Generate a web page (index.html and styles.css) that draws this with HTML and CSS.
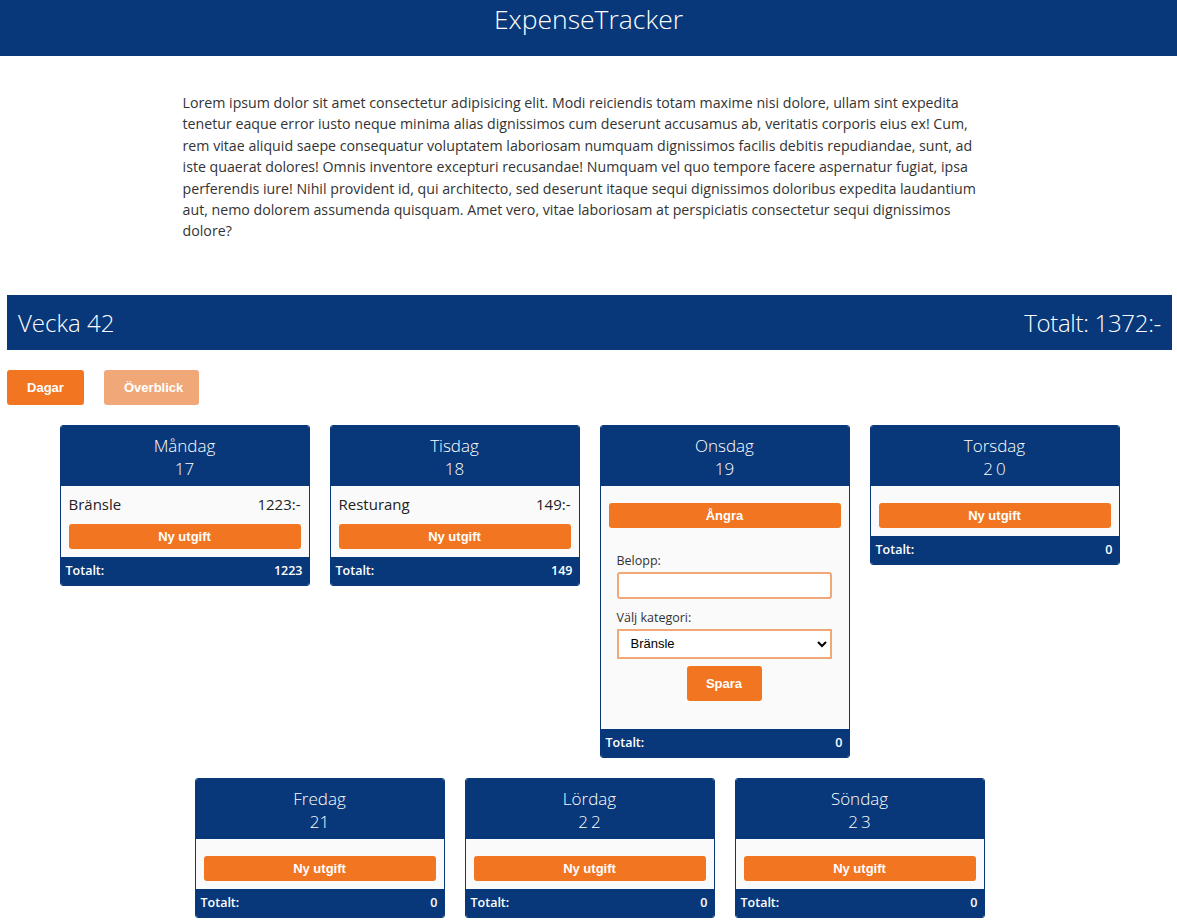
FILE: index.html
```html
<!DOCTYPE html>
<html lang="sv">
<head>
<meta charset="utf-8">
<title>ExpenseTracker</title>
<link rel="stylesheet" href="styles.css">
</head>
<body>
<header class="app-header">
  <h1 class="app-title">ExpenseTracker</h1>
</header>
<main>
  <p class="intro">Lorem ipsum dolor sit amet consectetur adipisicing elit. Modi reiciendis totam maxime nisi dolore, ullam sint expedita tenetur eaque error iusto neque minima alias dignissimos cum deserunt accusamus ab, veritatis corporis eius ex! Cum, rem vitae aliquid saepe consequatur voluptatem laboriosam numquam dignissimos facilis debitis repudiandae, sunt, ad iste quaerat dolores! Omnis inventore excepturi recusandae! Numquam vel quo tempore facere aspernatur fugiat, ipsa perferendis iure! Nihil provident id, qui architecto, sed deserunt itaque sequi dignissimos doloribus expedita laudantium aut, nemo dolorem assumenda quisquam. Amet vero, vitae laboriosam at perspiciatis consectetur sequi dignissimos dolore?</p>

  <section class="week">
    <div class="week-bar">
      <h2 class="week-title">Vecka 42</h2>
      <h2 class="week-title">Totalt: 1372:-</h2>
    </div>
    <div class="tabs">
      <button class="tab tab-active">Dagar</button>
      <button class="tab tab-inactive">Överblick</button>
    </div>

    <div class="days">
      <article class="day">
        <div class="day-head"><div>Måndag</div><div>17</div></div>
        <div class="day-body">
          <ul class="items">
            <li class="item"><span>Bränsle</span><span>1223:-</span></li>
          </ul>
          <button class="btn-wide">Ny utgift</button>
        </div>
        <div class="day-foot"><span>Totalt:</span><span>1223</span></div>
      </article>

      <article class="day">
        <div class="day-head"><div>Tisdag</div><div>18</div></div>
        <div class="day-body">
          <ul class="items">
            <li class="item"><span>Resturang</span><span>149:-</span></li>
          </ul>
          <button class="btn-wide">Ny utgift</button>
        </div>
        <div class="day-foot"><span>Totalt:</span><span>149</span></div>
      </article>

      <article class="day">
        <div class="day-head"><div>Onsdag</div><div>19</div></div>
        <div class="day-body">
          <ul class="items"></ul>
          <button class="btn-wide">Ångra</button>
          <form class="expense-form">
            <label class="field-label" for="belopp">Belopp:</label>
            <input class="field-input" id="belopp" type="text">
            <label class="field-label" for="kat">Välj kategori:</label>
            <select class="field-select" id="kat">
              <option>Bränsle</option>
              <option>Resturang</option>
            </select>
            <button type="button" class="btn-save">Spara</button>
          </form>
        </div>
        <div class="day-foot"><span>Totalt:</span><span>0</span></div>
      </article>

      <article class="day">
        <div class="day-head"><div>Torsdag</div><div class="spaced">20</div></div>
        <div class="day-body">
          <ul class="items"></ul>
          <button class="btn-wide">Ny utgift</button>
        </div>
        <div class="day-foot"><span>Totalt:</span><span>0</span></div>
      </article>

      <article class="day">
        <div class="day-head"><div>Fredag</div><div>21</div></div>
        <div class="day-body">
          <ul class="items"></ul>
          <button class="btn-wide">Ny utgift</button>
        </div>
        <div class="day-foot"><span>Totalt:</span><span>0</span></div>
      </article>

      <article class="day">
        <div class="day-head"><div>Lördag</div><div class="spaced">22</div></div>
        <div class="day-body">
          <ul class="items"></ul>
          <button class="btn-wide">Ny utgift</button>
        </div>
        <div class="day-foot"><span>Totalt:</span><span>0</span></div>
      </article>

      <article class="day">
        <div class="day-head"><div>Söndag</div><div class="spaced">23</div></div>
        <div class="day-body">
          <ul class="items"></ul>
          <button class="btn-wide">Ny utgift</button>
        </div>
        <div class="day-foot"><span>Totalt:</span><span>0</span></div>
      </article>
    </div>
  </section>
</main>
</body>
</html>
```

FILE: styles.css
```css
* { box-sizing: border-box; }

body {
  margin: 0;
  font-family: "Open Sans", "Noto Sans", sans-serif;
  color: #222;
  background: #fff;
}

.app-header {
  background: #08387a;
  color: #fff;
  height: 56px;
}

.app-title {
  margin: 0;
  text-align: center;
  font-weight: 300;
  font-size: 26.5px;
  line-height: 38px;
}

.intro {
  width: 70%;
  margin: 36px auto 0;
  padding: 0 6px;
  font-size: 14.2px;
  line-height: 21.4px;
  color: #333;
}

.week {
  margin: 53px 5px 8px 7px;
}

.week-bar {
  background: #08387a;
  color: #fff;
  height: 55px;
  padding: 0 11px;
  display: flex;
  align-items: center;
  justify-content: space-between;
}

.week-title {
  margin: 0;
  font-weight: 300;
  font-size: 24px;
}

.week-title:last-child {
  letter-spacing: -0.3px;
}

.tabs {
  display: flex;
  gap: 20px;
  margin-top: 20px;
}

.tab {
  height: 35px;
  border: none;
  border-radius: 3px;
  color: #fff;
  font-family: "Liberation Sans", Arial, sans-serif;
  font-weight: bold;
  font-size: 13px;
  padding: 0 20px;
}

.tab-active { background: #f27522; width: 77px; }
.tab-inactive { background: #f0a878; width: 95px; }

.days {
  margin-top: 20px;
  display: flex;
  flex-wrap: wrap;
  justify-content: center;
  align-items: flex-start;
  gap: 20px;
}

.day {
  width: 250px;
  border: 1px solid #08387a;
  border-radius: 3px;
  overflow: hidden;
  background: #fafafa;
}

.day-head {
  background: #08387a;
  color: #fff;
  text-align: center;
  font-weight: 300;
  font-size: 17px;
  line-height: 23px;
  padding: 8px 0 6px;
}

.spaced { letter-spacing: 3px; padding-left: 3px; }

.day-body {
  padding: 8px;
}

.items {
  list-style: none;
  margin: 0 0 9px;
  padding: 0;
}

.item {
  display: flex;
  justify-content: space-between;
  font-size: 15px;
  line-height: 21px;
  color: #222;
}

.btn-wide {
  display: block;
  width: 100%;
  height: 25px;
  border: none;
  border-radius: 3px;
  background: #f27522;
  color: #fff;
  font-family: "Liberation Sans", Arial, sans-serif;
  font-weight: bold;
  font-size: 13px;
}

.expense-form {
  padding: 24px 9px 20px 8px;
}

.field-label {
  display: block;
  font-size: 12.5px;
  line-height: 18px;
  color: #333;
  margin-bottom: 2px;
}

.field-input {
  display: block;
  width: 100%;
  height: 27px;
  border: 2px solid #f0a878;
  border-radius: 3px;
  background: #fff;
  margin-bottom: 10px;
}

.field-select {
  display: block;
  width: 100%;
  height: 30px;
  border: 2px solid #f0a878;
  border-radius: 0;
  background: #fff;
  font-family: "Liberation Sans", Arial, sans-serif;
  font-size: 13px;
  color: #000;
  padding: 0 8px;
  margin-bottom: 7px;
}

.btn-save {
  display: block;
  margin: 0 auto;
  width: 75px;
  height: 35px;
  border: none;
  border-radius: 3px;
  background: #f27522;
  color: #fff;
  font-family: "Liberation Sans", Arial, sans-serif;
  font-weight: bold;
  font-size: 13px;
}

.day-foot {
  background: #08387a;
  color: #fff;
  height: 28px;
  padding: 0 6px 0 5px;
  display: flex;
  align-items: center;
  justify-content: space-between;
  font-weight: 600;
  font-size: 12.5px;
}
```
